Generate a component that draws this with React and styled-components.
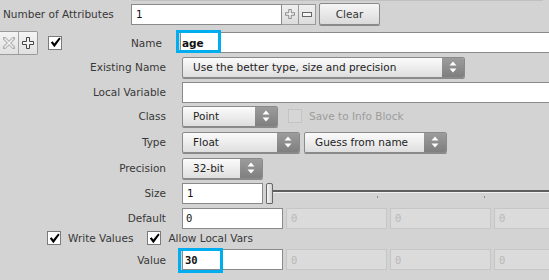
import React from 'react';
import styled, { createGlobalStyle } from 'styled-components';

const GlobalStyle = createGlobalStyle`
  html, body { margin: 0; padding: 0; background: #d3d3d3; overflow: hidden; }
  body {
    font-family: "DejaVu Sans", "Liberation Sans", sans-serif;
    font-size: 10.5px;
    color: #383838;
  }
`;

const Panel = styled.div`
  width: 549px;
  height: 280px;
  overflow: hidden;
  background: #d3d3d3;
`;

// remains of the parameter box above, cut by the window
const TopEdge = styled.div`
  margin-left: 130px;
  width: 412px;
  height: 1px;
  background: #c0c0c0;
  border-left: 1px solid #e4e4e4;
`;

const Row = styled.div`
  display: flex;
  align-items: center;
  height: ${(p) => p.$h || 22}px;
  margin-top: ${(p) => p.$mt || 0}px;
  white-space: nowrap;
`;

const Label = styled.div`
  width: 166px;
  flex: none;
  text-align: right;
  margin-right: 16px;
`;

const TopLabel = styled.div`
  width: 131px;
  flex: none;
  padding-left: 3px;
  box-sizing: border-box;
`;

const TextField = styled.div`
  position: relative;
  flex: none;
  box-sizing: border-box;
  width: ${(p) => p.$w || 101}px;
  height: 21px;
  background: #fff;
  border: 1px solid #8a8a8a;
  padding-left: ${(p) => p.$pl ?? 3}px;
  display: flex;
  align-items: center;
  color: #111;
  font-family: ${(p) => (p.$mono ? '"DejaVu Sans Mono", monospace' : 'inherit')};
  font-weight: ${(p) => (p.$bold ? 700 : 400)};
`;

const Highlight = styled.span`
  position: absolute;
  left: -5px;
  top: -${(p) => p.$t || 2}px;
  width: 45px;
  height: ${(p) => p.$h || 25}px;
  box-sizing: border-box;
  border: 3px solid #00aeef;
  pointer-events: none;
`;

const Dim = styled.div`
  flex: none;
  box-sizing: border-box;
  width: 101px;
  height: 21px;
  margin-left: 3px;
  background: #dbdbdb;
  border: 1px solid #c6c6c6;
  padding-left: 4px;
  display: flex;
  align-items: center;
  color: #b8b8b8;
  font-family: "DejaVu Sans Mono", monospace;
`;

const Select = styled.div`
  flex: none;
  box-sizing: border-box;
  width: ${(p) => p.$w}px;
  height: 21px;
  margin-left: ${(p) => p.$ml || 0}px;
  display: flex;
  border: 1px solid #8a8a8a;
  border-radius: 2px;
  background: linear-gradient(#fbfbfb, #dedede);
  box-shadow: 0 1px 0 #8a8a8a;
  overflow: hidden;
  color: #222;
`;

const SelectText = styled.span`
  flex: 1;
  padding-left: 10px;
  display: flex;
  align-items: center;
`;

const SelectArrow = styled.span`
  width: 22px;
  flex: none;
  background: linear-gradient(#9c9c9c, #7f7f7f);
  display: flex;
  align-items: center;
  justify-content: center;
`;

const Check = styled.span`
  flex: none;
  box-sizing: border-box;
  width: 14px;
  height: 14px;
  margin-left: ${(p) => p.$ml || 0}px;
  background: ${(p) => (p.$off ? '#d6d6d6' : '#fff')};
  border: 1px solid ${(p) => (p.$off ? '#c4c4c4' : '#7a7a7a')};
  display: flex;
  align-items: center;
  justify-content: center;
`;

const CheckText = styled.span`
  margin-left: 7px;
  color: ${(p) => (p.$off ? '#9c9c9c' : '#383838')};
`;

const IconPair = styled.div`
  flex: none;
  display: flex;
  height: 22px;
  border: 1px solid #9a9a9a;
  border-left: none;
  border-radius: 0 2px 2px 0;
  background: linear-gradient(#f4f4f4, #e0e0e0);
`;

const IconCell = styled.span`
  width: 18px;
  display: flex;
  align-items: center;
  justify-content: center;
  border-left: ${(p) => (p.$sep ? '1px solid #a4a4a4' : 'none')};
`;

const SpinButton = styled.span`
  flex: none;
  box-sizing: border-box;
  width: 17px;
  height: 21px;
  background: linear-gradient(#f0f0f0, #dcdcdc);
  border: 1px solid #9a9a9a;
  border-left: none;
  display: flex;
  align-items: center;
  justify-content: center;
`;

const Button = styled.button`
  flex: none;
  width: 61px;
  height: 22px;
  margin-left: 3px;
  font: inherit;
  color: #333;
  background: linear-gradient(#f6f6f6, #dadada);
  border: 1px solid #8a8a8a;
  border-radius: 2px;
  box-shadow: 0 1px 0 #8a8a8a;
  padding: 0;
`;

const NameLeft = styled.div`
  width: 162px;
  flex: none;
  display: flex;
  align-items: center;
  margin-right: 18px;
`;

const NameText = styled.span`
  margin-left: auto;
`;

const Slider = styled.div`
  flex: 1;
  display: flex;
  align-items: center;
  height: 22px;
  margin-left: 3px;
`;

const Handle = styled.span`
  flex: none;
  box-sizing: border-box;
  width: 7px;
  height: 21px;
  border: 1px solid #666;
  border-radius: 2px 2px 1px 1px;
  background: linear-gradient(90deg, #f6f6f6, #cfcfcf);
`;

const Track = styled.div`
  position: relative;
  flex: 1;
  height: 22px;
  &::before {
    content: '';
    position: absolute;
    left: 0; right: 0; top: 8px;
    height: 2px;
    background: #5e5e5e;
    border-bottom: 1px solid #f0f0f0;
  }
`;

const Tick = styled.span`
  position: absolute;
  top: 14px;
  width: 1px;
  height: 2px;
  background: #8a8a8a;
`;

const UpDown = () => (
  <svg width="8" height="12" viewBox="0 0 8 12">
    <path d="M4 0.5 L7.5 4.5 H0.5 Z M4 11.5 L7.5 7.5 H0.5 Z" fill="#fff" />
  </svg>
);

const Tickmark = () => (
  <svg width="11" height="11" viewBox="0 0 11 11">
    <path d="M0.8 5.6 L2.6 4.2 L4.3 6.6 L9.2 0.6 L10.6 1.8 L4.4 10.2 Z" fill="#000" />
  </svg>
);

const HollowPlus = ({ color = '#444', size = 12 }) => (
  <svg width={size} height={size} viewBox="0 0 12 12">
    <path d="M4.5 0.5 H7.5 V4.5 H11.5 V7.5 H7.5 V11.5 H4.5 V7.5 H0.5 V4.5 H4.5 Z" fill="#f4f4f4" stroke={color} strokeWidth="1" />
  </svg>
);

const HollowMinus = () => (
  <svg width="10" height="5" viewBox="0 0 10 5">
    <rect x="0.5" y="0.5" width="9" height="4" fill="#f4f4f4" stroke="#666" />
  </svg>
);

const HollowX = () => (
  <svg width="12" height="12" viewBox="0 0 12 12">
    <path d="M1 1 L11 11 M11 1 L1 11" stroke="#b0b0b0" strokeWidth="3.4" strokeLinecap="square" />
    <path d="M1.6 1.6 L10.4 10.4 M10.4 1.6 L1.6 10.4" stroke="#f2f2f2" strokeWidth="1.4" />
  </svg>
);

const Dims = () => (
  <>
    <Dim>0</Dim>
    <Dim>0</Dim>
    <Dim>0</Dim>
  </>
);

export default function App() {
  return (
    <Panel>
      <GlobalStyle />
      <TopEdge />

      <Row $mt={2} $h={22}>
        <TopLabel>Number of Attributes</TopLabel>
        <TextField $w={151} $pl={4}>1</TextField>
        <SpinButton><HollowPlus color="#777" size={10} /></SpinButton>
        <SpinButton><HollowMinus /></SpinButton>
        <Button>Clear</Button>
      </Row>

      <Row $mt={6} $h={23}>
        <NameLeft>
          <IconPair>
            <IconCell><HollowX /></IconCell>
            <IconCell $sep><HollowPlus /></IconCell>
          </IconPair>
          <Check $ml={10}><Tickmark /></Check>
          <NameText>Name</NameText>
        </NameLeft>
        <TextField $w={400} $pl={1} $bold>
          age
          <Highlight $t={3} $h={23} />
        </TextField>
      </Row>

      <Row $mt={2}>
        <Label>Existing Name</Label>
        <Select $w={283}>
          <SelectText>Use the better type, size and precision</SelectText>
          <SelectArrow><UpDown /></SelectArrow>
        </Select>
      </Row>

      <Row $mt={3}>
        <Label>Local Variable</Label>
        <TextField $w={400} />
      </Row>

      <Row $mt={2}>
        <Label>Class</Label>
        <Select $w={96}>
          <SelectText>Point</SelectText>
          <SelectArrow><UpDown /></SelectArrow>
        </Select>
        <Check $ml={10} $off />
        <CheckText $off>Save to Info Block</CheckText>
      </Row>

      <Row $mt={4}>
        <Label>Type</Label>
        <Select $w={118}>
          <SelectText>Float</SelectText>
          <SelectArrow><UpDown /></SelectArrow>
        </Select>
        <Select $w={143} $ml={4}>
          <SelectText>Guess from name</SelectText>
          <SelectArrow><UpDown /></SelectArrow>
        </Select>
      </Row>

      <Row $mt={4}>
        <Label>Precision</Label>
        <Select $w={81}>
          <SelectText>32-bit</SelectText>
          <SelectArrow><UpDown /></SelectArrow>
        </Select>
      </Row>

      <Row $mt={3}>
        <Label>Size</Label>
        <TextField $w={81} $pl={4}>1</TextField>
        <Slider>
          <Handle />
          <Track>
            <Tick style={{ left: 104 }} />
            <Tick style={{ left: 211 }} />
          </Track>
        </Slider>
      </Row>

      <Row $mt={3}>
        <Label>Default</Label>
        <TextField $mono>0</TextField>
        <Dims />
      </Row>

      <Row $mt={1} $h={16}>
        <Check $ml={47}><Tickmark /></Check>
        <CheckText>Write Values</CheckText>
        <Check $ml={14}><Tickmark /></Check>
        <CheckText>Allow Local Vars</CheckText>
      </Row>

      <Row $mt={1} $h={25}>
        <Label>Value</Label>
        <TextField $mono $bold $pl={2}>
          30
          <Highlight />
        </TextField>
        <Dims />
      </Row>
    </Panel>
  );
}
